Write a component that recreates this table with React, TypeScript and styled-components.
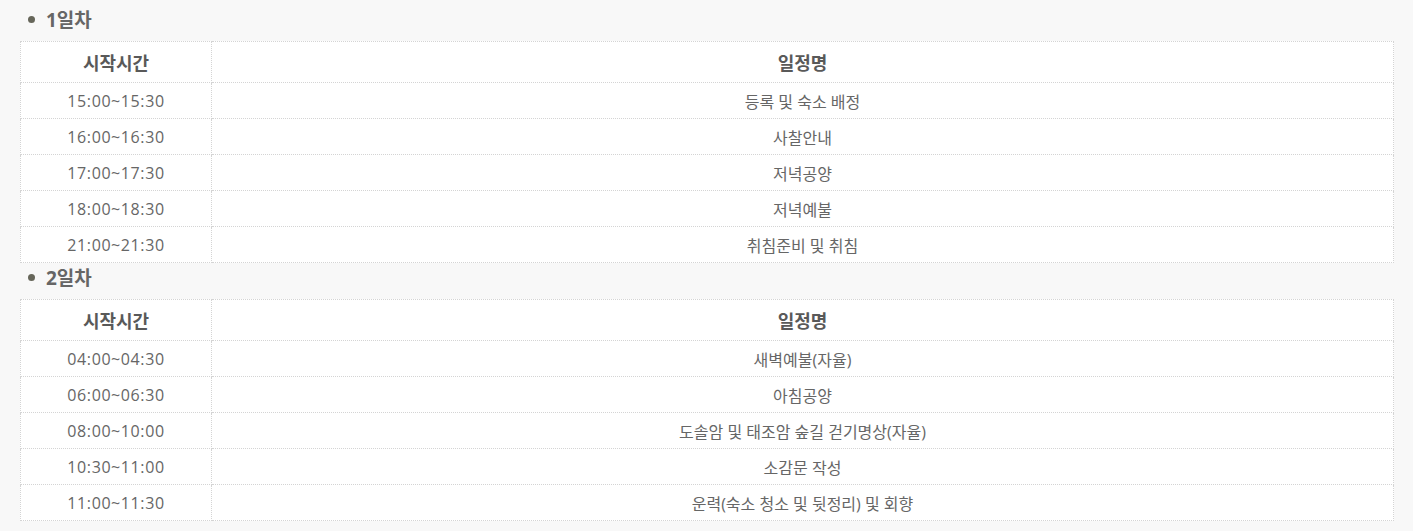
import React from 'react';
import styled, { createGlobalStyle } from 'styled-components';

const GlobalStyle = createGlobalStyle`
  html, body {
    margin: 0;
    padding: 0;
    background: #f8f8f8;
    font-family: "Open Sans", "Noto Sans CJK KR", sans-serif;
  }
`;

type Item = { time: string; name: string };

const days: { title: string; items: Item[] }[] = [
  {
    title: '1일차',
    items: [
      { time: '15:00~15:30', name: '등록 및 숙소 배정' },
      { time: '16:00~16:30', name: '사찰안내' },
      { time: '17:00~17:30', name: '저녁공양' },
      { time: '18:00~18:30', name: '저녁예불' },
      { time: '21:00~21:30', name: '취침준비 및 취침' }
    ]
  },
  {
    title: '2일차',
    items: [
      { time: '04:00~04:30', name: '새벽예불(자율)' },
      { time: '06:00~06:30', name: '아침공양' },
      { time: '08:00~10:00', name: '도솔암 및 태조암 숲길 걷기명상(자율)' },
      { time: '10:30~11:00', name: '소감문 작성' },
      { time: '11:00~11:30', name: '운력(숙소 청소 및 뒷정리) 및 회향' }
    ]
  }
];

const Page = () => {
  return (
    <>
      <GlobalStyle />
      <Wrapper>
        {days.map((day) => (
          <Section key={day.title}>
            <DayTitle>{day.title}</DayTitle>
            <Table>
              <colgroup>
                <col style={{ width: '191px' }} />
                <col />
              </colgroup>
              <thead>
                <tr>
                  <Th>시작시간</Th>
                  <Th>일정명</Th>
                </tr>
              </thead>
              <tbody>
                {day.items.map((item) => (
                  <tr key={item.time}>
                    <Td $time>{item.time}</Td>
                    <Td>{item.name}</Td>
                  </tr>
                ))}
              </tbody>
            </Table>
          </Section>
        ))}
      </Wrapper>
    </>
  );
};

const Wrapper = styled.div`
  padding: 5px 19px 10px 20px;
`;

const Section = styled.section`
  display: flex;
  flex-direction: column;
`;

const DayTitle = styled.h3`
  position: relative;
  margin: 0;
  height: 36px;
  line-height: 30px;
  padding-left: 26px;
  font-size: 19px;
  font-weight: 700;
  color: #666;

  &::before {
    content: '';
    position: absolute;
    left: 8px;
    top: 11px;
    width: 7px;
    height: 7px;
    border-radius: 50%;
    background: #66665a;
  }
`;

const Table = styled.table`
  width: 100%;
  border-collapse: collapse;
  table-layout: fixed;
  background: #fff;
`;

const Th = styled.th`
  height: 40px;
  padding: 0;
  border: 1px dotted #d4d4d4;
  font-size: 18px;
  font-weight: 700;
  color: #595959;
  text-align: center;
  vertical-align: middle;
`;

const Td = styled.td<{ $time?: boolean }>`
  height: 35px;
  padding: 0;
  border: 1px dotted #d4d4d4;
  font-size: 16px;
  letter-spacing: ${(p) => (p.$time ? '0.6px' : '0')};
  color: #666;
  text-align: center;
  vertical-align: middle;
`;

export default Page;
